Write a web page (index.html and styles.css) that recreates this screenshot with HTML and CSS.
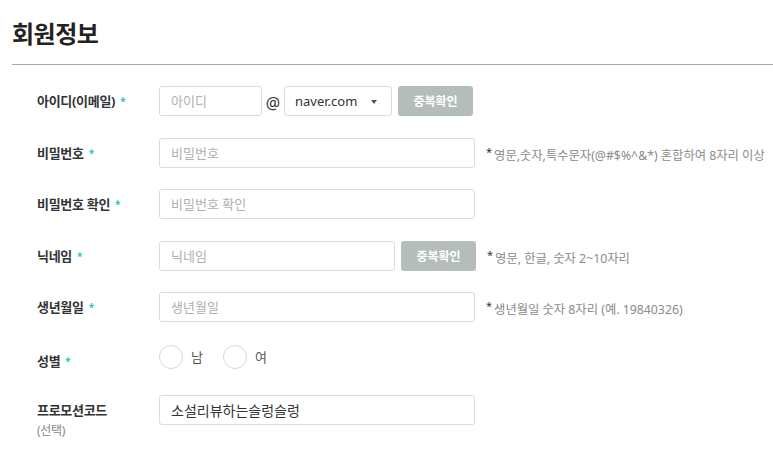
FILE: index.html
```html
<!DOCTYPE html>
<html lang="ko">
<head>
<meta charset="utf-8">
<title>회원정보</title>
<link rel="stylesheet" href="styles.css">
</head>
<body>
<div class="page">
  <h2 class="title">회원정보</h2>
  <div class="divider"></div>
  <div class="form">
    <div class="row">
      <div class="label">아이디(이메일)<span class="req">*</span></div>
      <div class="field">
        <input class="input w-id" type="text" placeholder="아이디">
        <span class="at">@</span>
        <div class="select">naver.com<span class="caret"></span></div>
        <button class="btn w-btn1" type="button">중복확인</button>
      </div>
    </div>
    <div class="row">
      <div class="label">비밀번호<span class="req">*</span></div>
      <div class="field">
        <input class="input w-full" type="password" placeholder="비밀번호">
        <span class="hint"><span class="hstar">*</span>영문,숫자,특수문자(@#$%^&amp;*) 혼합하여 8자리 이상</span>
      </div>
    </div>
    <div class="row">
      <div class="label">비밀번호 확인<span class="req">*</span></div>
      <div class="field">
        <input class="input w-full" type="password" placeholder="비밀번호 확인">
      </div>
    </div>
    <div class="row">
      <div class="label">닉네임<span class="req">*</span></div>
      <div class="field">
        <input class="input w-nick" type="text" placeholder="닉네임">
        <button class="btn w-btn2" type="button">중복확인</button>
        <span class="hint"><span class="hstar">*</span>영문, 한글, 숫자 2~10자리</span>
      </div>
    </div>
    <div class="row">
      <div class="label">생년월일<span class="req">*</span></div>
      <div class="field">
        <input class="input w-full" type="text" placeholder="생년월일">
        <span class="hint"><span class="hstar">*</span>생년월일 숫자 8자리 (예. 19840326)</span>
      </div>
    </div>
    <div class="row">
      <div class="label label-low">성별<span class="req">*</span></div>
      <div class="field radios">
        <label class="radio"><span class="circle"></span>남</label>
        <label class="radio"><span class="circle"></span>여</label>
      </div>
    </div>
    <div class="row">
      <div class="label label-stack">프로모션코드<span class="sub">(선택)</span></div>
      <div class="field">
        <input class="input w-full filled" type="text" value="소설리뷰하는슬렁슬렁">
      </div>
    </div>
  </div>
</div>
</body>
</html>
```

FILE: styles.css
```css
* { box-sizing: border-box; }
html, body { margin: 0; padding: 0; background: #fff; }
body {
  font-family: "Noto Sans", "Noto Sans CJK KR", sans-serif;
  color: #333;
  width: 773px;
  height: 454px;
  overflow: hidden;
}
.page { padding-left: 12px; }
.title {
  margin: 0;
  padding-top: 18px;
  height: 50px;
  font-size: 24px;
  font-weight: 700;
  line-height: 32px;
  color: #222;
  letter-spacing: -0.5px;
}
.divider {
  height: 1px;
  background: #a8a8a8;
  margin-top: 14px;
}
.form {
  padding-top: 21px;
  display: flex;
  flex-direction: column;
  gap: 21.5px;
}
.row {
  display: flex;
  align-items: flex-start;
  height: 30px;
}
.label {
  width: 147px;
  padding-left: 25px;
  font-size: 13px;
  font-weight: 700;
  color: #333;
  line-height: 30px;
  letter-spacing: -0.3px;
  flex: none;
}
.label-low { line-height: 34px; }
.label-stack { display: flex; flex-direction: column; line-height: 30px; }
.sub {
  font-size: 12px;
  font-weight: 400;
  color: #888;
  line-height: 14px;
  margin-top: -1px;
}
.req {
  color: #26c9bb;
  font-size: 10px;
  margin-left: 5px;
  vertical-align: 1px;
}
.field {
  display: flex;
  align-items: center;
  height: 30px;
}
.input {
  height: 30px;
  border: 1px solid #dcdcdc;
  border-radius: 3px;
  padding: 0 11px;
  font-family: inherit;
  font-size: 13px;
  color: #333;
  outline: none;
  background: #fff;
}
.input::placeholder { color: #b0b0b0; }
.filled { font-size: 14px; color: #333; }
.w-id { width: 103px; }
.w-full { width: 316px; }
.w-nick { width: 236px; }
.at {
  width: 22px;
  text-align: center;
  font-size: 16px;
  color: #333;
  padding-top: 3px;
}
.select {
  width: 108px;
  height: 30px;
  border: 1px solid #dcdcdc;
  border-radius: 3px;
  padding-left: 10px;
  font-size: 13px;
  line-height: 28px;
  color: #333;
  position: relative;
}
.caret {
  position: absolute;
  right: 14px;
  top: 13px;
  width: 0;
  height: 0;
  border-left: 3.5px solid transparent;
  border-right: 3.5px solid transparent;
  border-top: 4px solid #555;
}
.btn {
  height: 30px;
  border: none;
  border-radius: 3px;
  background: #b5bdba;
  color: #fff;
  font-family: inherit;
  font-size: 12px;
  font-weight: 700;
  padding: 0;
  margin-left: 6px;
}
.w-btn1 { width: 75px; }
.w-btn2 { width: 75px; }
.hint {
  margin-left: 11px;
  font-size: 12.3px;
  color: #8a8a8a;
  letter-spacing: 0;
  padding-top: 2px;
}
.hstar {
  color: #333;
  font-size: 11px;
  vertical-align: 4px;
  margin-right: 2px;
}
.radios { gap: 0; height: 24px; margin-top: 1px; }
.radio {
  display: flex;
  align-items: center;
  font-size: 13px;
  color: #555;
  margin-right: 20px;
}
.circle {
  width: 24px;
  height: 24px;
  border: 1px solid #d6d6d6;
  border-radius: 50%;
  margin-right: 8px;
  background: #fff;
}
```
